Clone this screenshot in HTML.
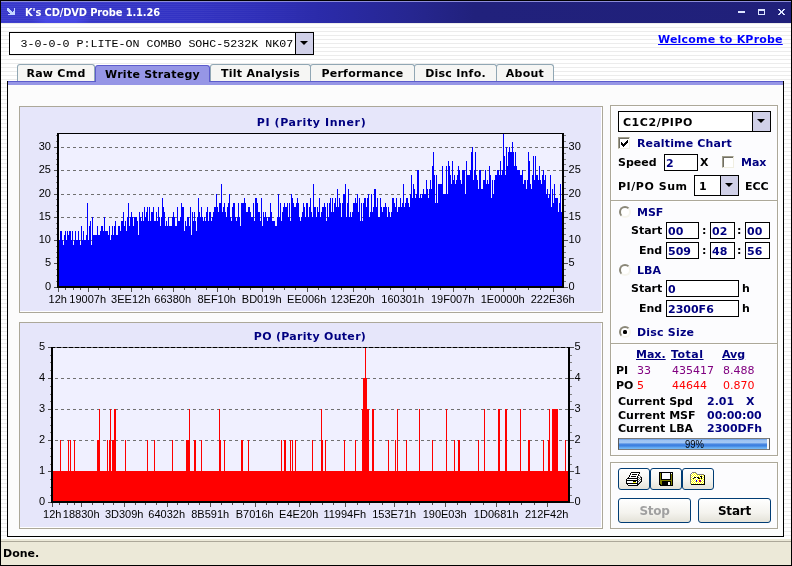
<!DOCTYPE html>
<html><head><meta charset="utf-8"><title>K's CD/DVD Probe 1.1.26</title>
<style>
*{box-sizing:border-box;margin:0;padding:0}
html,body{width:792px;height:566px;overflow:hidden;background:#fff}
body{position:relative;font-family:"DejaVu Sans","Liberation Sans",sans-serif;font-weight:bold;font-size:11px;color:#000}
#win *{position:absolute}
#win{position:absolute;left:0;top:0;width:792px;height:566px;background:#000;will-change:transform}
#client{left:1px;top:23px;width:790px;height:516px;background:repeating-linear-gradient(to bottom,#fff 0,#fff 3px,#ececec 3px,#ececec 4px);background-position:0 1px}
#title{left:1px;top:1px;width:790px;height:22px;background:linear-gradient(to right,#3838cc 0,#3232c4 22%,#2e2eb8 33%,#2a2aa6 42%,#262690 52%,#21217c 60%,#20207a 100%)}
#title .hl{left:0;top:0;width:790px;height:1px;background:#8c8cd8}
#title .txt{left:24px;top:5px;font-family:"DejaVu Sans Condensed","DejaVu Sans",sans-serif;font-size:11px;line-height:13px;font-weight:bold;color:#fff;white-space:nowrap;letter-spacing:-0.13px}
#status{left:1px;top:539px;width:790px;height:26px;background:linear-gradient(to bottom,#ece9d8 0,#ece9d8 2px,#aca899 2px,#aca899 3px,#ece9d8 3px)}
.t{white-space:nowrap;line-height:13px;height:13px}
.navy{color:#000080}
.n{font-weight:normal}
.combo{background:#fff;border:1px solid #000}
.combo .btn{right:0;top:0;bottom:0;width:18px;background:#d0d0e8;border-left:1px solid #000}
.combo .btn i{left:50%;top:50%;margin-left:-5px;margin-top:-3px;width:0;height:0;border-left:4px solid transparent;border-right:4px solid transparent;border-top:4px solid #000}
.tab{top:64px;height:18px;background:#f6f6f4;border:1px solid #91a7b4;border-bottom:none;border-radius:3px 3px 0 0;text-align:center;line-height:18px;white-space:nowrap;letter-spacing:0.25px}
.tab.sel{background:#9696e6;border-color:#5c5ccc;top:65px;height:17px;line-height:18px}
#panel{left:7px;top:81px;width:777px;height:456px;background:#fcfcfc;border:1px solid #000;border-top:none}
#pstrip{left:8px;top:81px;width:775px;height:4px;background:#9696e6;border-top:1px solid #5c5ccc}
.cpanel{background:#e6e6fa;border:1px solid #aca899;box-shadow:inset -1px -1px 0 #fff}
.chart{position:absolute}
.grp{border:1px solid #aca899;box-shadow:inset 1px 1px 0 #fff, 1px 1px 0 #fff;background:#fcfcfe}
.sep{height:1px;background:#aca899;border:none;box-shadow:0 1px 0 #fff}
.inp{background:#fff;border:1px solid #000;color:#000080;line-height:18px;padding-left:1px;white-space:nowrap;overflow:hidden}
.chk{width:12px;height:12px;background:#fff;border:1px solid;border-color:#a09d8c #f1efe2 #f1efe2 #a09d8c;box-shadow:inset 1px 1px 0 #716f64, inset -1px -1px 0 #fff}
.rad{width:12px;height:12px;border-radius:50%;background:#fff;border:2px solid;border-color:#8a8778 #f6f5ee #f6f5ee #8a8778}
.rad.on::after{content:"";position:absolute;left:2px;top:2px;width:4px;height:4px;border-radius:1.5px;background:#000}
.xpb{border:1px solid #003c74;border-radius:3px;background:linear-gradient(to bottom,#fff 0,#f4f3ee 60%,#e4e2d8 100%);text-align:center}
.u{text-decoration:underline}
#title .sw{left:30px;top:15px;width:60px;height:7px;background:linear-gradient(to right,rgba(80,80,245,0),rgba(80,80,245,.6) 25%,rgba(80,80,245,.6) 75%,rgba(80,80,245,0))}
#title .bd{left:0;top:1px;width:330px;height:21px;background:repeating-linear-gradient(to bottom,rgba(255,255,255,.05) 0,rgba(255,255,255,.05) 1px,rgba(0,0,0,0) 1px,rgba(0,0,0,0) 2px);-webkit-mask-image:linear-gradient(to right,#000 60%,transparent);mask-image:linear-gradient(to right,#000 60%,transparent)}

</style></head><body>
<div id="win">
 <div id="title"><div class="hl"></div><div class="bd"></div><div class="sw"></div><div class="txt">K's CD/DVD Probe 1.1.26</div>
  <svg style="left:6px;top:7px" width="8" height="7" viewBox="0 0 8 7" shape-rendering="crispEdges"><path d="M0 0h2v1h1v1h1v1h1v1h1V3h1V0h1v7H1V6h2V5H2V4H1V3H0z" fill="#c4d6ff"/></svg>
  <svg style="left:737px;top:8px" width="48" height="6" viewBox="0 0 48 6" shape-rendering="crispEdges"><g fill="#dde5ff"><path d="M0 2h7v2H0z"/><path d="M20 0h7v6h-7zM21 2v3h5V2z" fill-rule="evenodd"/><path d="M40 0h2v1h1v1h1V1h1V0h2v1h-1v1h-1v2h1v1h1v1h-2V5h-1V4h-1v1h-1v1h-2V5h1V4h1V2h-1V1h-1z"/></g></svg>
 </div>
 <div id="client"></div>
 <div id="status"><span class="t" style="left:2px;top:8px">Done.</span></div>

 <div class="combo" style="left:9px;top:32px;width:305px;height:23px"><span class="t n" style="left:10.5px;top:4.4px;font-family:'Liberation Mono',monospace;font-size:11.67px;line-height:14px">3-0-0-0 P:LITE-ON COMBO SOHC-5232K NK07</span><div class="btn"><i></i></div></div>
 <span class="t u" style="left:658px;top:33px;color:#0000ff;letter-spacing:0.2px">Welcome to KProbe</span>

 <div class="tab" style="left:17px;width:78px">Raw Cmd</div>
 <div class="tab" style="left:210px;width:101px">Tilt Analysis</div>
 <div class="tab" style="left:310px;width:105px">Performance</div>
 <div class="tab" style="left:414px;width:83px">Disc Info.</div>
 <div class="tab" style="left:496px;width:58px">About</div>
 <div id="panel"></div>
 <div id="pstrip"></div>
 <div class="tab sel" style="left:95px;width:115px">Write Strategy</div>

 <div class="cpanel" style="left:19px;top:106px;width:584px;height:207px"></div>
 <div class="cpanel" style="left:19px;top:322px;width:584px;height:207px"></div>
 <svg class="chart" style="left:19px;top:106px" width="584" height="207" viewBox="19 106 584 207">
<rect x="59" y="133" width="503" height="153" fill="#f0f0ff"/>
<line x1="61" y1="263.5" x2="562" y2="263.5" stroke="#707070" stroke-width="1" stroke-dasharray="3 3" shape-rendering="crispEdges"/>
<line x1="61" y1="240.5" x2="562" y2="240.5" stroke="#707070" stroke-width="1" stroke-dasharray="3 3" shape-rendering="crispEdges"/>
<line x1="61" y1="217.5" x2="562" y2="217.5" stroke="#707070" stroke-width="1" stroke-dasharray="3 3" shape-rendering="crispEdges"/>
<line x1="61" y1="194.5" x2="562" y2="194.5" stroke="#707070" stroke-width="1" stroke-dasharray="3 3" shape-rendering="crispEdges"/>
<line x1="61" y1="170.5" x2="562" y2="170.5" stroke="#707070" stroke-width="1" stroke-dasharray="3 3" shape-rendering="crispEdges"/>
<line x1="61" y1="147.5" x2="562" y2="147.5" stroke="#707070" stroke-width="1" stroke-dasharray="3 3" shape-rendering="crispEdges"/>
<path d="M59,286V240H60V231H61V231H62V240H63V245H64V235H65V231H66V240H67V231H68V235H69V231H70V231H71V240H72V231H73V245H74V240H75V231H76V240H77V240H78V231H79V240H80V245H81V226H82V240H83V231H84V240H85V240H86V235H87V203H88V240H89V226H90V221H91V245H92V217H93V235H94V235H95V235H96V235H97V226H98V235H99V235H100V231H101V226H102V226H103V231H104V217H105V231H106V231H107V231H108V235H109V226H110V240H111V235H112V226H113V235H114V226H115V221H116V235H117V235H118V226H119V226H120V231H121V221H122V221H123V212H124V226H125V221H126V231H127V217H128V203H129V226H130V217H131V212H132V217H133V226H134V217H135V217H136V217H137V221H138V235H139V212H140V217H141V221H142V212H143V221H144V207H145V217H146V212H147V207H148V221H149V207H150V221H151V212H152V212H153V207H154V221H155V221H156V212H157V221H158V207H159V217H160V226H161V217H162V198H163V207H164V212H165V226H166V221H167V226H168V217H169V226H170V226H171V226H172V217H173V212H174V217H175V226H176V226H177V207H178V221H179V221H180V217H181V203H182V207H183V207H184V231H185V221H186V226H187V217H188V217H189V226H190V207H191V235H192V212H193V221H194V212H195V221H196V231H197V217H198V198H199V212H200V217H201V207H202V217H203V221H204V217H205V221H206V212H207V207H208V221H209V212H210V212H211V221H212V217H213V212H214V207H215V207H216V194H217V207H218V212H219V203H220V203H221V184H222V212H223V207H224V203H225V212H226V217H227V207H228V203H229V194H230V217H231V221H232V207H233V203H234V203H235V217H236V221H237V217H238V203H239V217H240V226H241V203H242V203H243V203H244V198H245V203H246V212H247V212H248V207H249V207H250V212H251V217H252V217H253V203H254V221H255V198H256V198H257V203H258V212H259V212H260V221H261V198H262V226H263V212H264V217H265V212H266V217H267V221H268V217H269V217H270V203H271V212H272V221H273V221H274V221H275V226H276V226H277V217H278V194H279V217H280V203H281V221H282V212H283V207H284V203H285V207H286V207H287V203H288V217H289V203H290V221H291V194H292V198H293V203H294V207H295V207H296V203H297V198H298V203H299V217H300V221H301V217H302V212H303V203H304V207H305V217H306V203H307V203H308V217H309V207H310V198H311V212H312V217H313V184H314V207H315V207H316V217H317V207H318V212H319V198H320V217H321V212H322V207H323V207H324V203H325V207H326V221H327V203H328V217H329V203H330V198H331V212H332V198H333V212H334V203H335V198H336V207H337V189H338V207H339V198H340V203H341V217H342V203H343V194H344V194H345V184H346V217H347V203H348V189H349V217H350V212H351V217H352V212H353V203H354V203H355V198H356V203H357V194H358V212H359V198H360V221H361V203H362V221H363V203H364V198H365V198H366V207H367V198H368V194H369V217H370V212H371V194H372V212H373V207H374V189H375V189H376V207H377V198H378V217H379V217H380V198H381V207H382V212H383V207H384V207H385V203H386V207H387V217H388V207H389V212H390V217H391V212H392V198H393V198H394V203H395V207H396V198H397V212H398V207H399V207H400V198H401V207H402V203H403V184H404V207H405V203H406V198H407V198H408V203H409V207H410V194H411V175H412V198H413V184H414V189H415V198H416V194H417V170H418V170H419V198H420V194H421V198H422V194H423V189H424V194H425V194H426V180H427V189H428V198H429V189H430V180H431V189H432V166H433V152H434V175H435V203H436V175H437V203H438V184H439V184H440V184H441V184H442V166H443V194H444V194H445V194H446V166H447V194H448V161H449V166H450V175H451V184H452V161H453V180H454V175H455V184H456V180H457V175H458V166H459V170H460V180H461V184H462V170H463V170H464V170H465V194H466V161H467V175H468V175H469V175H470V170H471V152H472V147H473V180H474V170H475V152H476V175H477V180H478V189H479V170H480V170H481V189H482V189H483V180H484V180H485V170H486V184H487V180H488V184H489V166H490V175H491V198H492V180H493V194H494V180H495V175H496V175H497V170H498V170H499V175H500V161H501V175H502V170H503V133H504V156H505V175H506V147H507V166H508V152H509V147H510V152H511V152H512V142H513V152H514V166H515V152H516V166H517V170H518V170H519V170H520V175H521V175H522V170H523V184H524V180H525V180H526V189H527V180H528V152H529V161H530V184H531V189H532V175H533V156H534V180H535V156H536V175H537V175H538V180H539V166H540V180H541V184H542V175H543V170H544V180H545V175H546V194H547V189H548V198H549V194H550V175H551V207H552V189H553V203H554V184H555V198H556V198H557V198H558V212H559V203H560V184H561V212H562V286Z" fill="#0000ff" shape-rendering="crispEdges"/>
<g shape-rendering="crispEdges" fill="#000">
<rect x="57" y="133" width="507" height="1"/>
<rect x="57" y="133" width="2" height="155"/>
<rect x="562" y="133" width="2" height="155"/>
<rect x="57" y="286" width="507" height="2"/>
</g>
<g font-family="Liberation Sans, sans-serif" font-size="11" font-weight="normal" fill="#000" stroke="none">
<text x="51" y="290.2" text-anchor="end">0</text>
<text x="568.6" y="290.2">0</text>
<text x="51" y="266.2" text-anchor="end">5</text>
<text x="568.6" y="266.2">5</text>
<text x="51" y="243.2" text-anchor="end">10</text>
<text x="568.6" y="243.2">10</text>
<text x="51" y="220.2" text-anchor="end">15</text>
<text x="568.6" y="220.2">15</text>
<text x="51" y="197.2" text-anchor="end">20</text>
<text x="568.6" y="197.2">20</text>
<text x="51" y="173.2" text-anchor="end">25</text>
<text x="568.6" y="173.2">25</text>
<text x="51" y="150.2" text-anchor="end">30</text>
<text x="568.6" y="150.2">30</text>
<text x="57.7" y="302.5" text-anchor="middle">12h</text>
<text x="87.7" y="302.5" text-anchor="middle">19007h</text>
<text x="130.7" y="302.5" text-anchor="middle">3EE12h</text>
<text x="172.7" y="302.5" text-anchor="middle">66380h</text>
<text x="216.7" y="302.5" text-anchor="middle">8EF10h</text>
<text x="261.7" y="302.5" text-anchor="middle">BD019h</text>
<text x="306.7" y="302.5" text-anchor="middle">EE006h</text>
<text x="352.7" y="302.5" text-anchor="middle">123E20h</text>
<text x="402.7" y="302.5" text-anchor="middle">160301h</text>
<text x="452.7" y="302.5" text-anchor="middle">19F007h</text>
<text x="502.7" y="302.5" text-anchor="middle">1E0000h</text>
<text x="552.7" y="302.5" text-anchor="middle">222E36h</text>
<path d="M54,287.5H57M564,287.5H568M54,263.5H57M564,263.5H568M54,240.5H57M564,240.5H568M54,217.5H57M564,217.5H568M54,194.5H57M564,194.5H568M54,170.5H57M564,170.5H568M54,147.5H57M564,147.5H568M58.5,288V292M65.5,288V290M73.5,288V290M80.5,288V290M88.5,288V292M98.5,288V290M109.5,288V290M120.5,288V290M131.5,288V292M141.5,288V290M152.5,288V290M162.5,288V290M173.5,288V292M184.5,288V290M195.5,288V290M206.5,288V290M217.5,288V292M228.5,288V290M239.5,288V290M250.5,288V290M262.5,288V292M273.5,288V290M284.5,288V290M295.5,288V290M307.5,288V292M318.5,288V290M330.5,288V290M341.5,288V290M353.5,288V292M365.5,288V290M378.5,288V290M390.5,288V290M403.5,288V292M415.5,288V290M428.5,288V290M440.5,288V290M453.5,288V292M465.5,288V290M478.5,288V290M490.5,288V290M503.5,288V292M515.5,288V290M528.5,288V290M540.5,288V290M553.5,288V292" stroke="#505050" fill="none" shape-rendering="crispEdges"/>
<path d="M56,281.5H57M564,281.5H566M56,275.5H57M564,275.5H566M56,269.5H57M564,269.5H566M56,257.5H57M564,257.5H566M56,252.5H57M564,252.5H566M56,246.5H57M564,246.5H566M56,234.5H57M564,234.5H566M56,228.5H57M564,228.5H566M56,223.5H57M564,223.5H566M56,211.5H57M564,211.5H566M56,205.5H57M564,205.5H566M56,199.5H57M564,199.5H566M56,188.5H57M564,188.5H566M56,182.5H57M564,182.5H566M56,176.5H57M564,176.5H566M56,164.5H57M564,164.5H566M56,159.5H57M564,159.5H566M56,153.5H57M564,153.5H566M56,141.5H57M564,141.5H566M56,135.5H57M564,135.5H566" stroke="#808080" fill="none" shape-rendering="crispEdges"/>
</g>
<text x="311.5" y="125.5" text-anchor="middle" font-family="DejaVu Sans, sans-serif" font-weight="bold" font-size="11" letter-spacing="0.6" fill="#000080">PI (Parity Inner)</text>
</svg>
 <svg class="chart" style="left:19px;top:322px" width="584" height="207" viewBox="19 322 584 207">
<rect x="53" y="347" width="515" height="154" fill="#f0f0ff"/>
<line x1="55" y1="471.5" x2="568" y2="471.5" stroke="#707070" stroke-width="1" stroke-dasharray="3 3" shape-rendering="crispEdges"/>
<line x1="55" y1="440.5" x2="568" y2="440.5" stroke="#707070" stroke-width="1" stroke-dasharray="3 3" shape-rendering="crispEdges"/>
<line x1="55" y1="409.5" x2="568" y2="409.5" stroke="#707070" stroke-width="1" stroke-dasharray="3 3" shape-rendering="crispEdges"/>
<line x1="55" y1="378.5" x2="568" y2="378.5" stroke="#707070" stroke-width="1" stroke-dasharray="3 3" shape-rendering="crispEdges"/>
<line x1="55" y1="347.5" x2="568" y2="347.5" stroke="#707070" stroke-width="1" stroke-dasharray="3 3" shape-rendering="crispEdges"/>
<path d="M53,501V471H54V471H55V471H56V471H57V471H58V471H59V471H60V440H61V471H62V471H63V471H64V471H65V471H66V471H67V471H68V440H69V471H70V440H71V471H72V471H73V471H74V440H75V471H76V471H77V471H78V471H79V471H80V471H81V471H82V471H83V471H84V471H85V471H86V471H87V471H88V471H89V471H90V471H91V471H92V471H93V471H94V471H95V471H96V471H97V440H98V440H99V409H100V471H101V471H102V471H103V471H104V471H105V471H106V471H107V440H108V471H109V440H110V409H111V471H112V440H113V440H114V409H115V409H116V471H117V471H118V471H119V471H120V471H121V471H122V471H123V471H124V471H125V440H126V471H127V471H128V471H129V471H130V471H131V471H132V471H133V471H134V471H135V471H136V471H137V471H138V471H139V471H140V471H141V471H142V471H143V471H144V471H145V471H146V471H147V440H148V471H149V471H150V471H151V471H152V471H153V471H154V440H155V471H156V471H157V471H158V471H159V471H160V471H161V471H162V471H163V471H164V471H165V471H166V471H167V471H168V471H169V471H170V471H171V471H172V440H173V471H174V471H175V471H176V471H177V471H178V471H179V471H180V471H181V471H182V471H183V471H184V471H185V471H186V440H187V440H188V440H189V409H190V471H191V471H192V471H193V471H194V440H195V440H196V471H197V471H198V471H199V471H200V471H201V440H202V471H203V471H204V471H205V471H206V471H207V471H208V471H209V471H210V471H211V471H212V471H213V471H214V471H215V471H216V471H217V471H218V471H219V409H220V440H221V471H222V471H223V471H224V440H225V471H226V471H227V471H228V471H229V471H230V471H231V471H232V471H233V471H234V471H235V471H236V471H237V471H238V471H239V471H240V471H241V440H242V440H243V471H244V471H245V471H246V471H247V471H248V440H249V471H250V471H251V471H252V471H253V471H254V471H255V471H256V471H257V471H258V471H259V471H260V471H261V471H262V471H263V471H264V471H265V471H266V471H267V471H268V471H269V471H270V471H271V471H272V471H273V471H274V471H275V471H276V471H277V471H278V471H279V471H280V471H281V440H282V471H283V471H284V440H285V440H286V471H287V471H288V471H289V471H290V440H291V471H292V440H293V471H294V471H295V440H296V471H297V471H298V471H299V471H300V471H301V471H302V471H303V471H304V471H305V471H306V471H307V471H308V471H309V471H310V471H311V471H312V440H313V471H314V471H315V471H316V471H317V471H318V471H319V471H320V471H321V409H322V440H323V471H324V471H325V440H326V471H327V471H328V471H329V471H330V471H331V471H332V471H333V471H334V471H335V471H336V471H337V471H338V471H339V471H340V471H341V471H342V471H343V471H344V440H345V471H346V471H347V471H348V471H349V471H350V471H351V471H352V471H353V471H354V471H355V440H356V471H357V471H358V471H359V471H360V471H361V471H362V409H363V378H364V378H365V347H366V378H367V409H368V409H369V471H370V471H371V471H372V409H373V409H374V471H375V471H376V471H377V471H378V471H379V471H380V471H381V471H382V471H383V471H384V471H385V471H386V471H387V471H388V440H389V471H390V471H391V471H392V471H393V471H394V471H395V440H396V471H397V409H398V471H399V471H400V471H401V471H402V471H403V471H404V471H405V471H406V440H407V471H408V471H409V471H410V471H411V471H412V471H413V471H414V471H415V471H416V471H417V471H418V471H419V409H420V471H421V471H422V471H423V471H424V471H425V471H426V471H427V471H428V471H429V471H430V471H431V471H432V440H433V471H434V471H435V471H436V471H437V471H438V471H439V471H440V471H441V471H442V471H443V471H444V471H445V471H446V409H447V471H448V471H449V471H450V471H451V471H452V471H453V471H454V440H455V471H456V471H457V471H458V440H459V440H460V471H461V471H462V471H463V471H464V471H465V471H466V471H467V471H468V471H469V471H470V471H471V471H472V471H473V471H474V471H475V471H476V471H477V471H478V440H479V471H480V471H481V471H482V471H483V471H484V409H485V471H486V471H487V471H488V471H489V471H490V471H491V471H492V471H493V471H494V471H495V471H496V471H497V471H498V409H499V409H500V471H501V471H502V471H503V471H504V471H505V409H506V409H507V471H508V471H509V471H510V471H511V471H512V471H513V471H514V471H515V471H516V471H517V471H518V471H519V471H520V409H521V471H522V471H523V471H524V471H525V471H526V471H527V471H528V440H529V440H530V471H531V471H532V471H533V471H534V471H535V471H536V471H537V471H538V471H539V471H540V471H541V471H542V471H543V440H544V471H545V471H546V471H547V471H548V440H549V409H550V471H551V471H552V409H553V409H554V409H555V409H556V409H557V409H558V471H559V471H560V471H561V471H562V471H563V471H564V471H565V440H566V471H567V471H568V501Z" fill="#ff0000" shape-rendering="crispEdges"/>
<g shape-rendering="crispEdges" fill="#000">
<line x1="51" y1="347.5" x2="570" y2="347.5" stroke="#000" stroke-dasharray="4 2"/>
<rect x="51" y="347" width="2" height="156"/>
<rect x="568" y="347" width="2" height="156"/>
<rect x="51" y="501" width="519" height="2"/>
</g>
<g font-family="Liberation Sans, sans-serif" font-size="11" font-weight="normal" fill="#000" stroke="none">
<text x="45" y="505.2" text-anchor="end">0</text>
<text x="574.6" y="505.2">0</text>
<text x="45" y="474.2" text-anchor="end">1</text>
<text x="574.6" y="474.2">1</text>
<text x="45" y="443.2" text-anchor="end">2</text>
<text x="574.6" y="443.2">2</text>
<text x="45" y="412.2" text-anchor="end">3</text>
<text x="574.6" y="412.2">3</text>
<text x="45" y="381.2" text-anchor="end">4</text>
<text x="574.6" y="381.2">4</text>
<text x="45" y="350.2" text-anchor="end">5</text>
<text x="574.6" y="350.2">5</text>
<text x="52.2" y="517.5" text-anchor="middle">12h</text>
<text x="81.2" y="517.5" text-anchor="middle">18830h</text>
<text x="124.2" y="517.5" text-anchor="middle">3D309h</text>
<text x="166.7" y="517.5" text-anchor="middle">64032h</text>
<text x="210.2" y="517.5" text-anchor="middle">8B591h</text>
<text x="254.7" y="517.5" text-anchor="middle">B7016h</text>
<text x="298.7" y="517.5" text-anchor="middle">E4E20h</text>
<text x="344.7" y="517.5" text-anchor="middle">11994Fh</text>
<text x="394.2" y="517.5" text-anchor="middle">153E71h</text>
<text x="444.7" y="517.5" text-anchor="middle">190E03h</text>
<text x="496.2" y="517.5" text-anchor="middle">1D0681h</text>
<text x="546.7" y="517.5" text-anchor="middle">212F42h</text>
<path d="M48,502.5H51M570,502.5H574M48,471.5H51M570,471.5H574M48,440.5H51M570,440.5H574M48,409.5H51M570,409.5H574M48,378.5H51M570,378.5H574M48,347.5H51M570,347.5H574M52.5,503V507M59.5,503V505M67.5,503V505M74.5,503V505M81.5,503V507M92.5,503V505M103.5,503V505M113.5,503V505M124.5,503V507M135.5,503V505M145.5,503V505M156.5,503V505M167.5,503V507M177.5,503V505M188.5,503V505M199.5,503V505M210.5,503V507M221.5,503V505M232.5,503V505M243.5,503V505M255.5,503V507M266.5,503V505M277.5,503V505M288.5,503V505M299.5,503V507M310.5,503V505M322.5,503V505M333.5,503V505M345.5,503V507M357.5,503V505M369.5,503V505M382.5,503V505M394.5,503V507M407.5,503V505M419.5,503V505M432.5,503V505M445.5,503V507M457.5,503V505M470.5,503V505M483.5,503V505M496.5,503V507M509.5,503V505M521.5,503V505M534.5,503V505M547.5,503V507" stroke="#505050" fill="none" shape-rendering="crispEdges"/>
<path d="M50,495.5H51M570,495.5H572M50,487.5H51M570,487.5H572M50,479.5H51M570,479.5H572M50,464.5H51M570,464.5H572M50,456.5H51M570,456.5H572M50,448.5H51M570,448.5H572M50,432.5H51M570,432.5H572M50,425.5H51M570,425.5H572M50,417.5H51M570,417.5H572M50,401.5H51M570,401.5H572M50,394.5H51M570,394.5H572M50,386.5H51M570,386.5H572M50,370.5H51M570,370.5H572M50,362.5H51M570,362.5H572M50,355.5H51M570,355.5H572" stroke="#808080" fill="none" shape-rendering="crispEdges"/>
</g>
<text x="310" y="339.5" text-anchor="middle" font-family="DejaVu Sans, sans-serif" font-weight="bold" font-size="11" letter-spacing="0.3" fill="#000080">PO (Parity Outer)</text>
</svg>

 <div class="grp" style="left:610px;top:105px;width:168px;height:351px"></div>
 <div class="sep" style="left:611px;top:200px;width:166px"></div>
 <div class="sep" style="left:611px;top:343px;width:166px"></div>
 <div class="grp" style="left:610px;top:462px;width:168px;height:67px"></div>

 <div class="combo" style="left:618px;top:111px;width:153px;height:21px"><span class="t" style="left:4px;top:4px;letter-spacing:0.55px">C1C2/PIPO</span><div class="btn"><i></i></div></div>
 <div class="chk" style="left:618px;top:137px"><svg style="left:2px;top:1px" width="8" height="8" viewBox="0 0 8 8" shape-rendering="crispEdges"><path d="M1 3v3M2 4v3M3 5v3M4 4v3M5 3v3M6 2v3M7 1v3" stroke="#000" stroke-width="1" fill="none" transform="translate(-0.5,-0.5)"/></svg></div>
 <span class="t navy" style="left:637px;top:137px;letter-spacing:0.15px">Realtime Chart</span>
 <span class="t" style="left:618px;top:156px">Speed</span>
 <div class="inp" style="left:664px;top:154px;width:34px;height:17px;padding-left:1px">2</div>
 <span class="t" style="left:700px;top:156px">X</span>
 <div class="chk" style="left:722px;top:156px"></div>
 <span class="t navy" style="left:741px;top:156px">Max</span>
 <span class="t" style="left:618px;top:180px;letter-spacing:0.55px">PI/PO Sum</span>
 <div class="combo" style="left:694px;top:175px;width:45px;height:21px"><span class="t" style="left:4px;top:4px">1</span><div class="btn"><i></i></div></div>
 <span class="t" style="left:745px;top:180px">ECC</span>

 <div class="rad" style="left:619px;top:206px"></div>
 <span class="t navy" style="left:637px;top:206px">MSF</span>
 <span class="t" style="left:631px;top:224px">Start</span>
 <div class="inp" style="left:666px;top:222px;width:33px;height:17px">00</div>
 <span class="t" style="left:702px;top:224px">:</span>
 <div class="inp" style="left:710px;top:222px;width:25px;height:17px">02</div>
 <span class="t" style="left:737px;top:224px">:</span>
 <div class="inp" style="left:745px;top:222px;width:25px;height:17px">00</div>
 <span class="t" style="left:639px;top:244px">End</span>
 <div class="inp" style="left:666px;top:242px;width:33px;height:17px">509</div>
 <span class="t" style="left:702px;top:244px">:</span>
 <div class="inp" style="left:710px;top:242px;width:25px;height:17px">48</div>
 <span class="t" style="left:737px;top:244px">:</span>
 <div class="inp" style="left:745px;top:242px;width:25px;height:17px">56</div>
 <div class="rad" style="left:619px;top:264px"></div>
 <span class="t navy" style="left:637px;top:264px">LBA</span>
 <span class="t" style="left:631px;top:282px">Start</span>
 <div class="inp" style="left:666px;top:280px;width:73px;height:17px">0</div>
 <span class="t" style="left:742px;top:282px">h</span>
 <span class="t" style="left:639px;top:302px">End</span>
 <div class="inp" style="left:666px;top:300px;width:73px;height:17px">2300F6</div>
 <span class="t" style="left:742px;top:302px">h</span>
 <div class="rad on" style="left:619px;top:326px"></div>
 <span class="t navy" style="left:637px;top:326px;letter-spacing:0.2px">Disc Size</span>

 <span class="t navy u" style="left:636px;top:348px">Max.</span>
 <span class="t navy u" style="left:671px;top:348px;letter-spacing:0.5px">Total</span>
 <span class="t navy u" style="left:722px;top:348px">Avg</span>
 <span class="t" style="left:616px;top:364px">PI</span>
 <span class="t n" style="left:637px;top:364px;color:#800080">33</span>
 <span class="t n" style="left:672px;top:364px;color:#800080">435417</span>
 <span class="t n" style="left:723px;top:364px;color:#800080">8.488</span>
 <span class="t" style="left:616px;top:379px">PO</span>
 <span class="t n" style="left:637px;top:379px;color:#ff0000">5</span>
 <span class="t n" style="left:672px;top:379px;color:#ff0000">44644</span>
 <span class="t n" style="left:723px;top:379px;color:#ff0000">0.870</span>
 <span class="t" style="left:618px;top:395px">Current Spd</span>
 <span class="t navy" style="left:707px;top:395px">2.01</span>
 <span class="t navy" style="left:746px;top:395px">X</span>
 <span class="t" style="left:618px;top:409px">Current MSF</span>
 <span class="t navy" style="left:707px;top:409px">00:00:00</span>
 <span class="t" style="left:618px;top:422px">Current LBA</span>
 <span class="t navy" style="left:707px;top:422px">2300DFh</span>
 <div style="left:618px;top:438px;width:152px;height:12px;background:linear-gradient(to bottom,#5a96e6 0,#9cc2f2 12%,#a4c8f4 38%,#4a88e2 50%,#3c80e0 68%,#62a8f0 85%,#78bcf6 100%);border:1px solid #7b7b7b;border-left-color:#5a5a5a;border-right-color:#5a5a5a"></div>
 <div style="left:767px;top:439px;width:2px;height:10px;background:#f8f8f8"></div>
 <span class="t n" style="left:684.5px;top:438px;font-family:'Liberation Sans',sans-serif;font-size:11px;transform:scaleX(0.86);transform-origin:0 0">99%</span>

 <div class="xpb" style="left:618px;top:468px;width:32px;height:22px"><svg style="left:7px;top:3px" width="16" height="14" viewBox="0 0 16 14" shape-rendering="crispEdges"><path d="M5 0h9v1h-9zM4 1h1v1h-1zM13 1h1v1h-1zM4 2h1v1h-1zM6 2h5v1h-5zM12 2h1v1h-1zM3 3h1v1h-1zM12 3h1v1h-1zM3 4h1v1h-1zM5 4h5v1h-5zM11 4h1v1h-1zM2 5h1v1h-1zM11 5h1v1h-1zM15 5h1v1h-1zM1 6h11v1h-11zM15 6h1v1h-1zM0 7h1v1h-1zM11 7h1v1h-1zM15 7h1v1h-1zM0 8h12v1h-12zM15 8h1v1h-1zM0 9h1v1h-1zM7 9h3v1h-3zM11 9h1v1h-1zM15 9h1v1h-1zM0 10h1v1h-1zM11 10h1v1h-1zM14 10h1v1h-1zM0 11h12v1h-12zM13 11h1v1h-1zM1 12h1v1h-1zM11 12h2v1h-2zM2 13h10v1h-10z" fill="#000"/><path d="M5 1h8v1h-8zM5 2h1v1h-1zM11 2h1v1h-1zM4 3h8v1h-8zM4 4h1v1h-1zM10 4h1v1h-1zM13 4h1v1h-1zM3 5h8v1h-8zM13 5h1v1h-1zM12 6h1v1h-1zM14 6h1v1h-1zM1 7h10v1h-10zM13 7h1v1h-1zM12 8h1v1h-1zM14 8h1v1h-1zM1 9h6v1h-6zM10 9h1v1h-1zM13 9h1v1h-1zM1 10h6v1h-6zM10 10h1v1h-1zM12 10h1v1h-1zM2 12h9v1h-9z" fill="#fff"/><path d="M13 3h1v1h-1zM14 4h1v1h-1zM12 5h1v1h-1zM14 5h1v1h-1zM13 6h1v1h-1zM12 7h1v1h-1zM14 7h1v1h-1zM13 8h1v1h-1zM12 9h1v1h-1zM14 9h1v1h-1zM13 10h1v1h-1zM12 11h1v1h-1z" fill="#606060"/><path d="M7 10h3v1h-3z" fill="#ffff00"/></svg></div>
 <div class="xpb" style="left:650px;top:468px;width:32px;height:22px"><svg style="left:8px;top:3px" width="14" height="14" viewBox="0 0 14 14" shape-rendering="crispEdges">
<path d="M0 0h14v14H1v-1H0z" fill="#000"/><path d="M1 1h12v12H2v-1H1z" fill="#808000"/>
<path d="M2 0h10v8H2z" fill="#000"/><path d="M3 1h8v6H3z" fill="#fff"/>
<path d="M12 1h1v1h-1z" fill="#fff"/>
<path d="M3 9h9v5H3z" fill="#000"/><path d="M9 10h2v3H9z" fill="#fff"/>
</svg></div>
 <div class="xpb" style="left:682px;top:468px;width:32px;height:22px"><svg style="left:7px;top:3px" width="15" height="13" viewBox="0 0 15 13" shape-rendering="crispEdges"><path d="M2 0h4v1h-4zM1 1h1v1h-1zM6 1h1v1h-1zM0 2h1v1h-1zM7 2h7v1h-7zM0 3h1v1h-1zM0 4h1v1h-1zM0 5h1v1h-1zM0 6h1v1h-1zM0 7h1v1h-1zM0 8h1v1h-1zM0 9h1v1h-1zM0 10h1v1h-1zM0 11h1v1h-1z" fill="#808080"/><path d="M2 1h1v1h-1zM4 1h1v1h-1zM1 2h1v1h-1zM3 2h1v1h-1zM5 2h1v1h-1zM2 3h1v1h-1zM4 3h1v1h-1zM6 3h1v1h-1zM8 3h1v1h-1zM10 3h1v1h-1zM12 3h1v1h-1zM1 4h1v1h-1zM3 4h1v1h-1zM5 4h1v1h-1zM7 4h1v1h-1zM9 4h1v1h-1zM13 4h1v1h-1zM2 5h2v1h-2zM6 5h1v1h-1zM10 5h1v1h-1zM12 5h1v1h-1zM1 6h1v1h-1zM5 6h3v1h-3zM13 6h1v1h-1zM2 7h1v1h-1zM4 7h1v1h-1zM6 7h1v1h-1zM8 7h1v1h-1zM10 7h1v1h-1zM12 7h1v1h-1zM1 8h1v1h-1zM3 8h1v1h-1zM5 8h1v1h-1zM7 8h1v1h-1zM11 8h1v1h-1zM13 8h1v1h-1zM2 9h1v1h-1zM4 9h1v1h-1zM8 9h1v1h-1zM12 9h1v1h-1zM1 10h1v1h-1zM3 10h1v1h-1zM5 10h1v1h-1zM7 10h1v1h-1zM9 10h1v1h-1zM11 10h1v1h-1zM13 10h1v1h-1zM2 11h1v1h-1zM4 11h1v1h-1zM6 11h1v1h-1zM8 11h1v1h-1zM10 11h1v1h-1zM12 11h1v1h-1z" fill="#fff"/><path d="M3 1h1v1h-1zM5 1h1v1h-1zM2 2h1v1h-1zM4 2h1v1h-1zM6 2h1v1h-1zM1 3h1v1h-1zM3 3h1v1h-1zM5 3h1v1h-1zM7 3h1v1h-1zM9 3h1v1h-1zM11 3h1v1h-1zM13 3h1v1h-1zM2 4h1v1h-1zM4 4h1v1h-1zM6 4h1v1h-1zM8 4h1v1h-1zM12 4h1v1h-1zM1 5h1v1h-1zM9 5h1v1h-1zM13 5h1v1h-1zM2 6h1v1h-1zM4 6h1v1h-1zM10 6h1v1h-1zM12 6h1v1h-1zM1 7h1v1h-1zM3 7h1v1h-1zM5 7h1v1h-1zM7 7h1v1h-1zM9 7h1v1h-1zM11 7h1v1h-1zM13 7h1v1h-1zM2 8h1v1h-1zM4 8h1v1h-1zM8 8h1v1h-1zM12 8h1v1h-1zM1 9h1v1h-1zM3 9h1v1h-1zM5 9h1v1h-1zM7 9h1v1h-1zM11 9h1v1h-1zM13 9h1v1h-1zM2 10h1v1h-1zM4 10h1v1h-1zM6 10h1v1h-1zM8 10h1v1h-1zM10 10h1v1h-1zM12 10h1v1h-1zM1 11h1v1h-1zM3 11h1v1h-1zM5 11h1v1h-1zM7 11h1v1h-1zM9 11h1v1h-1zM11 11h1v1h-1zM13 11h1v1h-1z" fill="#ffff00"/><path d="M14 3h1v1h-1zM10 4h2v1h-2zM14 4h1v1h-1zM4 5h2v1h-2zM7 5h2v1h-2zM11 5h1v1h-1zM14 5h1v1h-1zM3 6h1v1h-1zM8 6h2v1h-2zM11 6h1v1h-1zM14 6h1v1h-1zM14 7h1v1h-1zM14 8h1v1h-1zM14 9h1v1h-1zM14 10h1v1h-1zM14 11h1v1h-1zM1 12h14v1h-14z" fill="#000"/><path d="M6 8h1v1h-1zM6 9h1v1h-1z" fill="#00f"/><path d="M9 8h1v1h-1zM9 9h1v1h-1z" fill="#f00"/><path d="M10 8h1v1h-1zM10 9h1v1h-1z" fill="#808"/></svg></div>
 <div class="xpb" style="left:618px;top:498px;width:73px;height:25px;font-size:12px;line-height:24px;letter-spacing:-0.3px;color:#a0a0a0">Stop</div>
 <div class="xpb" style="left:698px;top:498px;width:73px;height:25px;font-size:12px;line-height:24px;letter-spacing:-0.2px">Start</div>
</div>

</body></html>
